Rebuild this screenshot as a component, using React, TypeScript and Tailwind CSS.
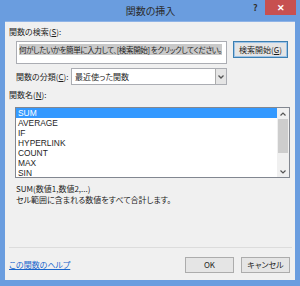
import React from 'react';

const jp = "font-['Meiryo_UI','Noto_Sans_CJK_JP',sans-serif] [font-feature-settings:'palt']";

const functions = ['SUM', 'AVERAGE', 'IF', 'HYPERLINK', 'COUNT', 'MAX', 'SIN'];

const InsertFunctionDialog: React.FC = () => {
  return (
    <div className={`w-[300px] h-[286px] bg-[#6a9ddf] flex flex-col text-[#1e1e1e] ${jp}`}>
      {/* title bar */}
      <div className="relative h-[21px] flex items-center justify-center">
        <span className="text-[10px] leading-none text-[#2b2b2b] pl-[1px]">関数の挿入</span>
        <span className="absolute left-[253px] top-[1px] text-[9px] font-bold text-[#333]">?</span>
        <div className="absolute left-[265px] top-0 w-[31px] h-[15px] bg-[#c75050] flex items-center justify-center">
          <span className="text-white text-[9px] leading-none font-bold">✕</span>
        </div>
      </div>

      {/* body */}
      <div className="flex-1 mx-[5px] mb-[6px] bg-[#f0f0f0] border-t border-[#8fb3e6] pl-[4px] pr-[3px] pt-[4px] flex flex-col text-[8px]">
        <div className="leading-[12px]">
          関数の検索(<span className="underline">S</span>):
        </div>
        <div className="flex mt-[3px]">
          <div className="ml-[7px] w-[211px] h-[23px] bg-white border border-[#abadb3] px-[2px] pt-[2px] overflow-hidden">
            <span className="bg-[#c9c9c9] leading-[11px] inline-block text-[7.6px] tracking-[-0.45px] whitespace-nowrap">
              何がしたいかを簡単に入力して、[検索開始] をクリックしてください。
            </span>
          </div>
          <button className="ml-[6px] w-[55px] h-[17px] bg-[#e5e5e5] border border-[#3c7fb1] outline outline-1 -outline-offset-2 outline-[#9ec4e8] flex items-center justify-center leading-none">
            検索開始(<span className="underline">G</span>)
          </button>
        </div>

        <div className="flex items-center mt-[4px] h-[17px]">
          <div className="ml-[7px] w-[55px] leading-[12px]">
            関数の分類(<span className="underline">C</span>):
          </div>
          <div className="w-[156px] h-[17px] bg-white border border-[#abadb3] flex items-center">
            <span className="flex-1 pl-[3px] leading-none">最近使った関数</span>
            <div className="w-[11px] h-full bg-[#e5e5e5] border-l border-[#acacac] flex items-center justify-center">
              <svg width="6" height="4" viewBox="0 0 6 4">
                <path d="M0.5 0.5 L3 3 L5.5 0.5" stroke="#555" strokeWidth="1.3" fill="none" />
              </svg>
            </div>
          </div>
        </div>

        <div className="mt-[4px] leading-[12px]">
          関数名(<span className="underline">N</span>):
        </div>
        <div className="mt-[6px] ml-[6px] w-[275px] h-[71px] bg-white border border-[#828790] flex">
          <div className="flex-1 flex flex-col font-['Liberation_Sans',sans-serif] text-[8.4px]">
            {functions.map((f, i) => (
              <div
                key={f}
                className={`h-[10px] leading-[10px] pl-[2px] ${i === 0 ? 'bg-[#3399ff] text-white' : ''}`}
              >
                {f}
              </div>
            ))}
          </div>
          <div className="w-[12px] h-full bg-[#f0f0f0] flex flex-col items-center">
            <div className="h-[11px] flex items-center justify-center">
              <svg width="6" height="4" viewBox="0 0 6 4">
                <path d="M0.5 3.5 L3 1 L5.5 3.5" stroke="#555" strokeWidth="1.2" fill="none" />
              </svg>
            </div>
            <div className="w-[10px] h-[34px] bg-[#cdcdcd]" />
            <div className="flex-1" />
            <div className="h-[11px] flex items-center justify-center">
              <svg width="6" height="4" viewBox="0 0 6 4">
                <path d="M0.5 0.5 L3 3 L5.5 0.5" stroke="#555" strokeWidth="1.2" fill="none" />
              </svg>
            </div>
          </div>
        </div>

        <div className="mt-[5px] ml-[7px] leading-[11px]">
          <div>SUM(数値1,数値2,...)</div>
          <div>セル範囲に含まれる数値をすべて合計します。</div>
        </div>

        <div className="mt-[42px] h-px bg-[#dcdcdc]" />

        <div className="flex items-center mt-[9px] mr-[2px]">
          <span className="flex-1 text-[#1a66cc] underline leading-none">この関数のヘルプ</span>
          <button className="w-[49px] h-[16px] bg-[#e5e5e5] border border-[#acacac] leading-none">OK</button>
          <button className="ml-[7px] w-[49px] h-[16px] bg-[#e5e5e5] border border-[#acacac] leading-none">キャンセル</button>
        </div>
      </div>
    </div>
  );
};

export default function App() {
  return <InsertFunctionDialog />;
}
